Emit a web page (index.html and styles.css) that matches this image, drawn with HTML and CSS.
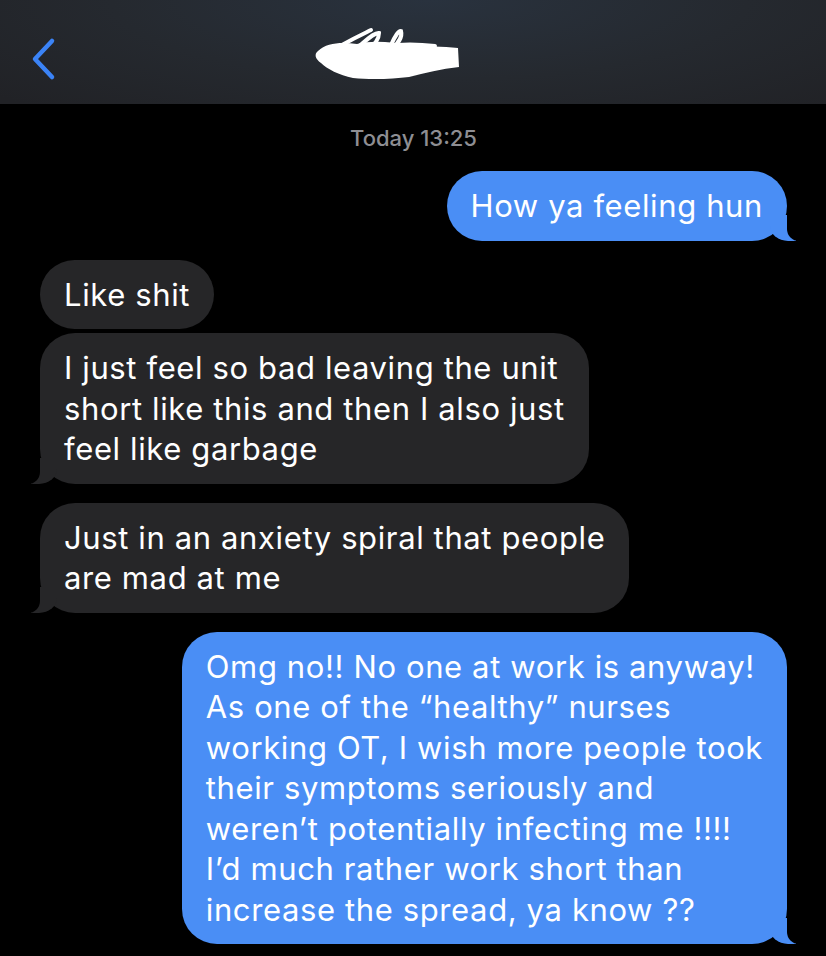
FILE: index.html
```html
<!DOCTYPE html>
<html lang="en">
<head>
    <meta charset="UTF-8">
    <meta name="viewport" content="width=device-width, initial-scale=1.0">
    <title>Messages</title>
    <link rel="stylesheet" href="styles.css">
</head>
<body>
    <div class="top-bar">
        <svg class="back-icon" width="26" height="44" viewBox="0 0 26 44">
            <path d="M21 4 L4 22 L21 40" fill="none" stroke="#3b83f6" stroke-width="4.5" stroke-linecap="round" stroke-linejoin="round"/>
        </svg>
        <svg class="scribble" width="150" height="54" viewBox="0 0 150 54">
            <path d="M5 24 C14 15 30 15 44 17 C58 13 80 15 96 18 C112 20 130 19 145 21 L146 40 C128 42 112 46 96 50 C80 52 58 53 40 51 C26 48 14 42 8 36 C2 32 1 27 5 24 Z" fill="#fff"/>
            <path d="M9 30 C30 16 50 7 58 3 M40 24 C55 12 62 5 66 6 C66 13 60 19 54 23 M78 18 C82 9 86 3 88 4 C90 11 84 17 80 21 M50 24 C70 18 96 16 122 19" fill="none" stroke="#fff" stroke-width="4" stroke-linecap="round"/>
        </svg>
    </div>

    <div class="thread">
        <div class="stamp">Today 13:25</div>

        <div class="bubble sent tail">How ya feeling hun</div>

        <div class="bubble got grouped">Like shit</div>
        <div class="bubble got tail">I just feel so bad leaving the unit<br>short like this and then I also just<br>feel like garbage</div>

        <div class="bubble got tail">Just in an anxiety spiral that people<br>are mad at me</div>

        <div class="bubble sent tail">Omg no!! No one at work is anyway!<br>As one of the “healthy” nurses<br>working OT, I wish more people took<br>their symptoms seriously and<br>weren’t potentially infecting me !!!!<br>I’d much rather work short than<br>increase the spread, ya know ??</div>
    </div>
</body>
</html>
```
FILE: styles.css
```css
body {
    margin: 0;
    background: #000;
    font-family: Inter, "Noto Sans", sans-serif;
    color: #fff;
}

.top-bar {
    height: 104px;
    display: flex;
    align-items: center;
    padding-left: 31px;
    background: radial-gradient(ellipse 70% 140% at 52% 0%, #29323e 0%, #25292f 55%, #212226 100%);
}
.back-icon {
    margin-top: 14px;
}
.scribble {
    margin-left: 256px;
    margin-top: 4px;
    filter: blur(0.6px);
}

.thread {
    display: flex;
    flex-direction: column;
    padding: 0 39px 0 40px;
}
.stamp {
    align-self: center;
    margin-top: 21px;
    margin-bottom: 20px;
    font-size: 22px;
    line-height: 26px;
    color: #8e8e93;
    font-weight: 500;
}

.bubble {
    position: relative;
    white-space: nowrap;
    font-size: 31px;
    letter-spacing: 0.62px;
    line-height: 40.5px;
    padding: 15px 24px 14px;
    border-radius: 35px;
    margin-bottom: 19px;
}
.bubble.grouped {
    margin-bottom: 4px;
}
.sent {
    align-self: flex-end;
    background: #4a8ef5;
}
.got {
    align-self: flex-start;
    background: #262628;
}

.tail::before,
.tail::after {
    content: "";
    position: absolute;
    bottom: 0;
    height: 26px;
}
.sent.tail::before {
    right: -9px;
    width: 26px;
    background: #4a8ef5;
    border-bottom-left-radius: 18px 15px;
}
.sent.tail::after {
    right: -28px;
    width: 28px;
    background: #000;
    border-bottom-left-radius: 12px;
}
.got.tail::before {
    left: -9px;
    width: 26px;
    background: #262628;
    border-bottom-right-radius: 18px 15px;
}
.got.tail::after {
    left: -28px;
    width: 28px;
    background: #000;
    border-bottom-right-radius: 12px;
}
```
